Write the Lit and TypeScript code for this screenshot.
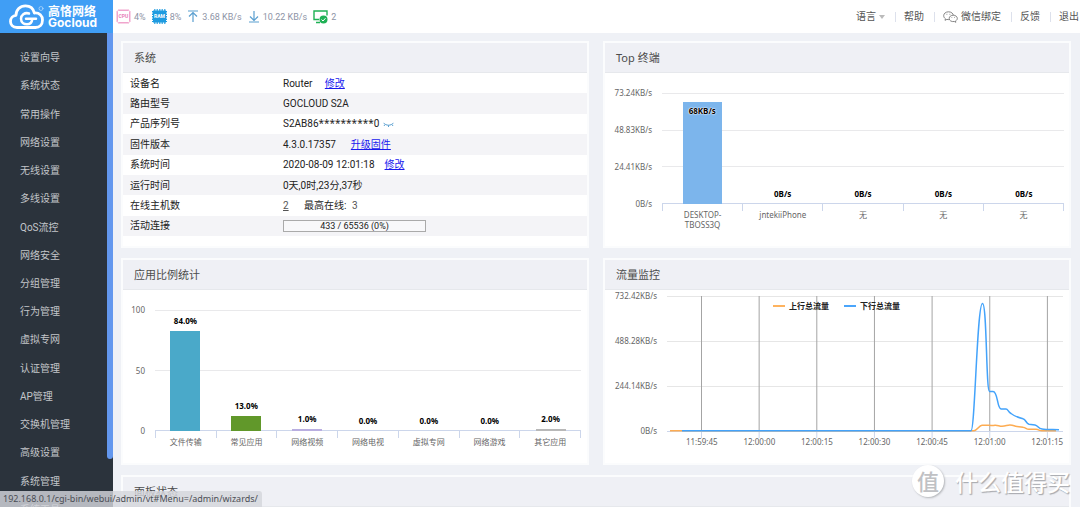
import { LitElement, html, svg, css } from "lit";
import { customElement, property } from "lit/decorators.js";
import { styleMap } from "lit/directives/style-map.js";

interface Bar {
  name: string;
  label: string;
  value: number;
  color: string;
  inside?: boolean;
}

const MENU = [
  "设置向导", "系统状态", "常用操作", "网络设置", "无线设置", "多线设置",
  "QoS流控", "网络安全", "分组管理", "行为管理", "虚拟专网", "认证管理",
  "AP管理", "交换机管理", "高级设置", "系统管理", "系统工具",
];

const TERMINALS: Bar[] = [
  { name: "DESKTOP-TBOSS3Q", label: "68KB/s", value: 92, color: "#7cb5ec", inside: true },
  { name: "jntekiiPhone", label: "0B/s", value: 0, color: "#7cb5ec" },
  { name: "无", label: "0B/s", value: 0, color: "#7cb5ec" },
  { name: "无", label: "0B/s", value: 0, color: "#7cb5ec" },
  { name: "无", label: "0B/s", value: 0, color: "#7cb5ec" },
];

const APPS: Bar[] = [
  { name: "文件传输", label: "84.0%", value: 83, color: "#4aa9c9" },
  { name: "常见应用", label: "13.0%", value: 12, color: "#61982a" },
  { name: "网络视频", label: "1.0%", value: 1.7, color: "#b9aee0" },
  { name: "网络电视", label: "0.0%", value: 0, color: "#999" },
  { name: "虚拟专网", label: "0.0%", value: 0, color: "#999" },
  { name: "网络游戏", label: "0.0%", value: 0, color: "#999" },
  { name: "其它应用", label: "2.0%", value: 1.7, color: "#b8b8b8" },
];

const TIMES = ["11:59:45", "12:00:00", "12:00:15", "12:00:30", "12:00:45", "12:01:00", "12:01:15"];

@customElement("bar-chart")
class BarChart extends LitElement {
  @property({ attribute: false }) bars: Bar[] = [];
  @property({ attribute: false }) ticks: string[] = [];

  static styles = css`
    :host { display: grid; grid-template-columns: var(--axis) 1fr; column-gap: 10px;
      font: 8px/10px "Noto Sans", "Noto Sans CJK SC", sans-serif; color: #666; }
    .axis { display: flex; flex-direction: column; justify-content: space-between;
      height: calc(var(--plot) + 10px); margin: -5px 0; text-align: right; }
    .plot { display: grid; height: var(--plot); }
    .lines, .bars { grid-area: 1 / 1; }
    .lines { display: flex; flex-direction: column; justify-content: space-between; }
    .line { height: 1px; background: #e9e9eb; }
    .line:last-child { background: #ccd6eb; }
    .bars { display: flex; }
    .slot { flex: 1; display: flex; flex-direction: column; justify-content: flex-end; align-items: center; }
    .bar { width: var(--bar); box-sizing: border-box; display: flex; justify-content: center; }
    .bar .value { margin-top: 4px; text-shadow: 0 0 1px #fff, 0 0 1px #fff, 0 0 2px #fff; }
    .value { font-weight: 700; color: #000; }
    .slot > .value { margin-bottom: 5px; }
    .names { grid-column: 2; display: flex; }
    .name { flex: 1; text-align: center; border-left: 1px solid #ccd6eb; height: 7px;
      padding: 0 16px; white-space: nowrap; }
    .name.long { white-space: normal; }
    .name:last-child { border-right: 1px solid #ccd6eb; }
    .name span { display: block; padding-top: 6px; margin: 0 -8px; }
    .name.long span { margin: 0; }
  `;

  render() {
    return html`
      <div class="axis">${this.ticks.map((t) => html`<span>${t}</span>`)}</div>
      <div class="plot">
        <div class="lines">${this.ticks.map(() => html`<div class="line"></div>`)}</div>
        <div class="bars">
          ${this.bars.map((b) => html`
            <div class="slot">
              ${b.inside ? null : html`<span class="value">${b.label}</span>`}
              <div class="bar" style=${styleMap({ height: `${b.value}%`, background: b.color })}>
                ${b.inside ? html`<span class="value">${b.label}</span>` : null}
              </div>
            </div>`)}
        </div>
      </div>
      <div class="names">
        ${this.bars.map((b) => html`<div class="name ${b.name.includes("-") ? "long" : ""}"><span>${b.name}</span></div>`)}
      </div>
    `;
  }
}

@customElement("traffic-chart")
class TrafficChart extends LitElement {
  static styles = css`
    :host { display: grid; grid-template-columns: 46px 1fr; column-gap: 10px;
      font: 8px/10px "Noto Sans", "Noto Sans CJK SC", sans-serif; color: #666; }
    .axis { display: flex; flex-direction: column; justify-content: space-between;
      height: 145px; margin: -5px 0; text-align: right; }
    .plot { display: grid; height: 136px; }
    .curve { grid-area: 1 / 1; width: 100%; height: 136px; display: block; overflow: visible; }
    .legend { grid-area: 1 / 1; display: flex; justify-content: center; gap: 15px;
      align-self: start; padding: 5px 57px 0 0; color: #222; font-weight: 700; }
    .item { display: flex; align-items: center; gap: 4px; }
    .dash { width: 12px; height: 2px; background: #feb35f; }
    .dash.down { background: #4aa5fb; }
    .times { grid-column: 2; display: grid; grid-template-columns: repeat(7, 1fr);
      margin: 0 -13px 0 6px; text-align: center; padding-top: 5px; }
  `;

  render() {
    const xs = TIMES.map((_, i) => 34.5 + i * 57.65);
    return html`
      <div class="axis"><span>732.42KB/s</span><span>488.28KB/s</span><span>244.14KB/s</span><span>0B/s</span></div>
      <div class="plot">
        <svg class="curve" viewBox="0 0 396 136" preserveAspectRatio="none" fill="none">
          ${[0.5, 45.5, 90.5].map((y) => svg`<path d="M0 ${y}H396" stroke="#e6e6e6" vector-effect="non-scaling-stroke"/>`)}
          <path d="M0 135.5H396" stroke="#ccd6eb" vector-effect="non-scaling-stroke"/>
          ${xs.map((x) => svg`<path d="M${x} 0V135" stroke="#a4a4a4" vector-effect="non-scaling-stroke"/>
            <path d="M${x} 136V142" stroke="#ccd6eb" vector-effect="non-scaling-stroke"/>`)}
          <path d="M3 134.8H307C310 134.8 312 129.5 315 129.3C320 129 324 129.8 328 129.2C331 129 332 130.3 335 130.3C339 130.3 340 128.9 343 129C347 129.2 347 130.2 350 130.4L356 131.2C359 131.5 359 133.2 362 133.3H369C372 133.3 372 134.8 375 134.8H389"
            stroke="#fdac52" stroke-width="1.5" vector-effect="non-scaling-stroke"/>
          <path d="M15 134.8H304C308 134.8 310 7.5 315.5 7.5C320 7.5 319 95 322.5 95.5H326C331 95.5 330 112.5 334 113H339C341 113 341 116 344 117.5C348 120.5 351 121.5 356 122.8C359 123.5 359 127.5 362 128.2L368 129C371 129.5 371 132.5 375 133C380 133.7 386 133.5 392 133.8"
            stroke="#43a3fb" stroke-width="1.5" vector-effect="non-scaling-stroke"/>
        </svg>
        <div class="legend">
          <span class="item"><i class="dash"></i>上行总流量</span>
          <span class="item"><i class="dash down"></i>下行总流量</span>
        </div>
      </div>
      <div class="times">${TIMES.map((t) => html`<span>${t}</span>`)}</div>
    `;
  }
}

@customElement("app-root")
class AppRoot extends LitElement {
  static styles = css`
    :host { display: flex; flex-direction: column; height: 100vh; overflow: hidden; position: relative;
      background: #eff1f6; color: #222; font: 10px/14px Roboto, "Noto Sans CJK SC", sans-serif; }
    a { color: inherit; text-decoration: none; }
    .top { display: flex; flex: none; height: 33px; background: #fff; }
    .logo { width: 113px; background: #409ef5; color: #fff; display: flex; align-items: center; gap: 3px;
      padding-left: 9px; box-sizing: border-box; }
    .logo svg { width: 36px; height: 26px; flex: none; }
    .brand { display: flex; flex-direction: column; font: 700 12px/11px Inter, "Noto Sans CJK SC", sans-serif; }
    .stats { display: flex; align-items: center; flex: 1; padding-left: 3px; color: #8e94a6; font-size: 9px; }
    .stat { display: flex; align-items: center; gap: 3px; margin-right: 6px; white-space: nowrap; }
    .links { display: flex; align-items: center; color: #555; padding-right: 1px; }
    .links a { display: flex; align-items: center; gap: 3px; padding: 0 10px 0 8px; border-left: 1px solid #dde1ec;
      height: 10px; white-space: nowrap; }
    .links a:first-child { border-left: 0; }
    .links a:last-child { padding-right: 0; }
    .arrow { border: 3px solid transparent; border-top: 4px solid #bbb; border-bottom: 0; }
    .body { display: flex; flex: 1; min-height: 0; }
    .side { width: 107px; flex: none; background: #2b333c; overflow: hidden; }
    .menu { list-style: none; margin: 0; padding: 11px 0 0 20px; height: 480px; display: grid;
      grid-template-rows: repeat(17, 1fr); align-items: center; color: #c3c6ca; }
    .track { width: 6px; flex: none; background: #2b333c; }
    .thumb { height: 426px; background: #6397ee; border-radius: 0 0 3px 3px; }
    main { flex: 1; min-width: 0; overflow: hidden; padding: 8px 9px 0 8px; display: grid;
      grid-template-columns: 1fr 1fr; gap: 10px 14px; align-content: start; grid-auto-rows: 207px; }
    .panel { background: #fff; border: 2px solid #fbfcfd; box-sizing: border-box; min-width: 0; }
    .wide { grid-column: 1 / -1; }
    h2 { margin: 0; height: 30px; box-sizing: border-box; padding-left: 11px; font: 400 11px/29px "Noto Sans", "Noto Sans CJK SC", sans-serif;
      color: #4c4c4c; background: #eff0f5; border-bottom: 1px solid #e6e8ec; }
    table { width: 100%; height: 163px; border-collapse: collapse; }
    th, td { padding: 1px 0 0; font-weight: 400; text-align: left; line-height: 18px; white-space: nowrap; }
    th { width: 160px; padding-left: 7px; box-sizing: border-box; }
    td a { color: #1a1aee; text-decoration: underline; margin-left: 10px; }
    td a.count { color: #555; margin: 0 13px 0 0; }
    .stars { font-family: "Noto Sans", sans-serif; line-height: 1; }
    .peak { color: #555; margin-left: 3px; }
    tr:nth-child(even) { background: #f4f4f7; }
    .meter { width: 143px; height: 12px; box-sizing: border-box; border: 1px solid #aaa; line-height: 10px;
      text-align: center; background: #f8f8fa; font-size: 9px; }
    .eye { width: 11px; height: 5px; margin-left: 4px; }
    .terminals { --axis: 38px; --plot: 111px; --bar: 39px; padding: 20px 5px 0 9px; }
    .apps { --axis: 20px; --plot: 121px; --bar: 30px; padding: 20px 6px 0 2px; }
    .traffic { padding: 6px 6px 0 6px; }
    .status { position: absolute; left: 0; bottom: 0; padding: 0 4px 0 3px; height: 16px; line-height: 16px;
      background: rgba(212, 214, 220, .82); color: #4b4e55; font-size: 9px; font-family: "Noto Sans", sans-serif;
      border-radius: 0 3px 0 0; white-space: nowrap; }
    .mark { position: absolute; right: 10px; bottom: 9px; display: flex; align-items: center; gap: 11px; color: #fff;
      font: 500 23px/34px "Noto Sans CJK SC", sans-serif; text-shadow: 1px 1px 1px #aaacb1, 1px 1px 1px #c4c6ca; }
    .seal { width: 32px; height: 32px; border-radius: 50%; background: #fff; color: #c0c1c4; font-size: 22px; line-height: 30px;
      text-align: center; text-shadow: none; box-shadow: 1px 1px 2px #b4b6ba; }
  `;

  render() {
    return html`
      <header class="top">
        <div class="logo">
          <svg viewBox="0 0 36 26" fill="none" stroke="#fff" stroke-linecap="round" stroke-linejoin="round">
            <path d="M8 23.5C3.5 23.5 1.5 20.5 1.5 17.5C1.5 14 4 11.5 7 11.3C7 6 11 1.8 16.5 1.8C21.5 1.8 24.5 5 25.3 9C30.5 8.500 33.500 12 33.500 16C33.500 20.500 30.500 23.500 26.500 23.500Z" stroke-width="2.8"/>
            <path d="M20 9.500C15.500 8 12 11.500 12 14.800C12 18.500 15 20.300 18 20.300C21 20.300 23 18 23.300 14.800M17 14.800H27" stroke-width="2.500"/>
            <circle cx="32" cy="4.500" r="2" stroke-width=".6" opacity=".7"/>
          </svg>
          <div class="brand"><span>高恪网络</span><span>Gocloud</span></div>
        </div>
        <div class="stats">
          <span class="stat">
            <svg width="15" height="15" viewBox="0 0 15 15" fill="none" stroke="#f0a5cd">
              <rect x="1.500" y="1.500" width="12" height="12" rx="1"/>
              <path d="M.5 2.500V13M14.500 2.500V13M2.500 .5H13M2.500 14.500H13" stroke-dasharray="1 1"/>
              <text x="7.500" y="9.300" font-size="5" font-weight="700" text-anchor="middle" fill="#e87fb8" stroke="none">CPU</text>
            </svg>4%</span>
          <span class="stat">
            <svg width="15" height="15" viewBox="0 0 15 15">
              <rect x="1" y="1.500" width="13" height="12" fill="#1e9be0"/>
              <path d="M.5 2V13M14.500 2V13M2 1H14M2 14H14" stroke="#1e9be0" stroke-width="1.500" stroke-dasharray="1.500 1"/>
              <text x="7.500" y="9.300" font-size="5" font-weight="700" text-anchor="middle" fill="#fff">RAM</text>
            </svg>8%</span>
          <span class="stat">
            <svg width="12" height="13" viewBox="0 0 11 13" fill="none" stroke="#5a9fd0" stroke-width="1.200"><path d="M.5 1H10.500M5.500 12V2M1.500 6.500L5.500 2.500L9.500 6.500"/></svg>3.68 KB/s</span>
          <span class="stat">
            <svg width="12" height="13" viewBox="0 0 11 13" fill="none" stroke="#5a9fd0" stroke-width="1.200"><path d="M.5 12H10.500M5.500 1V11M1.500 6.500L5.500 10.500L9.500 6.500"/></svg>10.22 KB/s</span>
          <span class="stat">
            <svg width="15" height="14" viewBox="0 0 15 14" fill="none" stroke="#1fb155">
              <path d="M6 9.500H1V1H14V5.500M3 12.500H7" stroke-width="1.400"/>
              <circle cx="10.500" cy="9.500" r="4" fill="#1fb155" stroke="none"/>
              <path d="M8.500 9.500L10 11L12.500 8.200" stroke="#fff"/>
            </svg>2</span>
        </div>
        <nav class="links">
          <a href="#">语言<i class="arrow"></i></a>
          <a href="#">帮助</a>
          <a href="#">
            <svg width="15" height="12" viewBox="0 0 15 12" fill="#fff" stroke="#777" stroke-width=".9">
              <path d="M5.500 .8C2.800 .8 .7 2.500 .7 4.700C.7 6 1.400 7 2.400 7.700L2 9.300L3.900 8.400C7.500 9.200 10.400 7.500 10.400 4.700C10.400 2.500 8.200 .8 5.500 .8Z"/>
              <path d="M10.200 4.200C7.900 4.200 6.200 5.600 6.200 7.400C6.200 9.600 8.500 11 11.300 10.500L12.800 11.300L12.500 10C13.600 9.300 14.300 8.500 14.300 7.400C14.300 5.600 12.500 4.200 10.200 4.200Z"/>
              <path d="M3.500 3.300H4.300M6.500 3.300H7.300M8.500 6.400H9.200M11.200 6.400H11.900"/>
            </svg>微信绑定</a>
          <a href="#">反馈</a>
          <a href="#">退出</a>
        </nav>
      </header>
      <div class="body">
        <nav class="side">
          <ul class="menu">${MENU.map((m) => html`<li><a href="#">${m}</a></li>`)}</ul>
        </nav>
        <div class="track"><div class="thumb"></div></div>
        <main>
          <section class="panel">
            <h2>系统</h2>
            <table>
              <tr><th scope="row">设备名</th><td>Router <a href="#">修改</a></td></tr>
              <tr><th scope="row">路由型号</th><td>GOCLOUD S2A</td></tr>
              <tr><th scope="row">产品序列号</th><td>S2AB86<span class="stars">**********</span>0<svg class="eye" viewBox="0 0 11 5" fill="none" stroke="#5a9fd0"><path d="M.5 .8C3 4 8 4 10.500 .8M2 2.500L1 4M5.500 3.200V5M9 2.500L10 4"/></svg></td></tr>
              <tr><th scope="row">固件版本</th><td>4.3.0.17357 &nbsp;<a href="#">升级固件</a></td></tr>
              <tr><th scope="row">系统时间</th><td>2020-08-09 12:01:18<a href="#">修改</a></td></tr>
              <tr><th scope="row">运行时间</th><td>0天,0时,23分,37秒</td></tr>
              <tr><th scope="row">在线主机数</th><td><a class="count" href="#">2</a> 最高在线: <span class="peak">3</span></td></tr>
              <tr><th scope="row">活动连接</th><td><div class="meter">433 / 65536 (0%)</div></td></tr>
            </table>
          </section>
          <section class="panel">
            <h2>Top 终端</h2>
            <bar-chart class="terminals" .bars=${TERMINALS} .ticks=${["73.24KB/s", "48.83KB/s", "24.41KB/s", "0B/s"]}></bar-chart>
          </section>
          <section class="panel">
            <h2>应用比例统计</h2>
            <bar-chart class="apps" .bars=${APPS} .ticks=${["100", "50", "0"]}></bar-chart>
          </section>
          <section class="panel">
            <h2>流量监控</h2>
            <traffic-chart class="traffic"></traffic-chart>
          </section>
          <section class="panel wide"><h2>面板状态</h2></section>
        </main>
      </div>
      <div class="mark"><span class="seal">值</span><span>什么值得买</span></div>
      <div class="status">192.168.0.1/cgi-bin/webui/admin/vt#Menu=/admin/wizards/</div>
    `;
  }
}
